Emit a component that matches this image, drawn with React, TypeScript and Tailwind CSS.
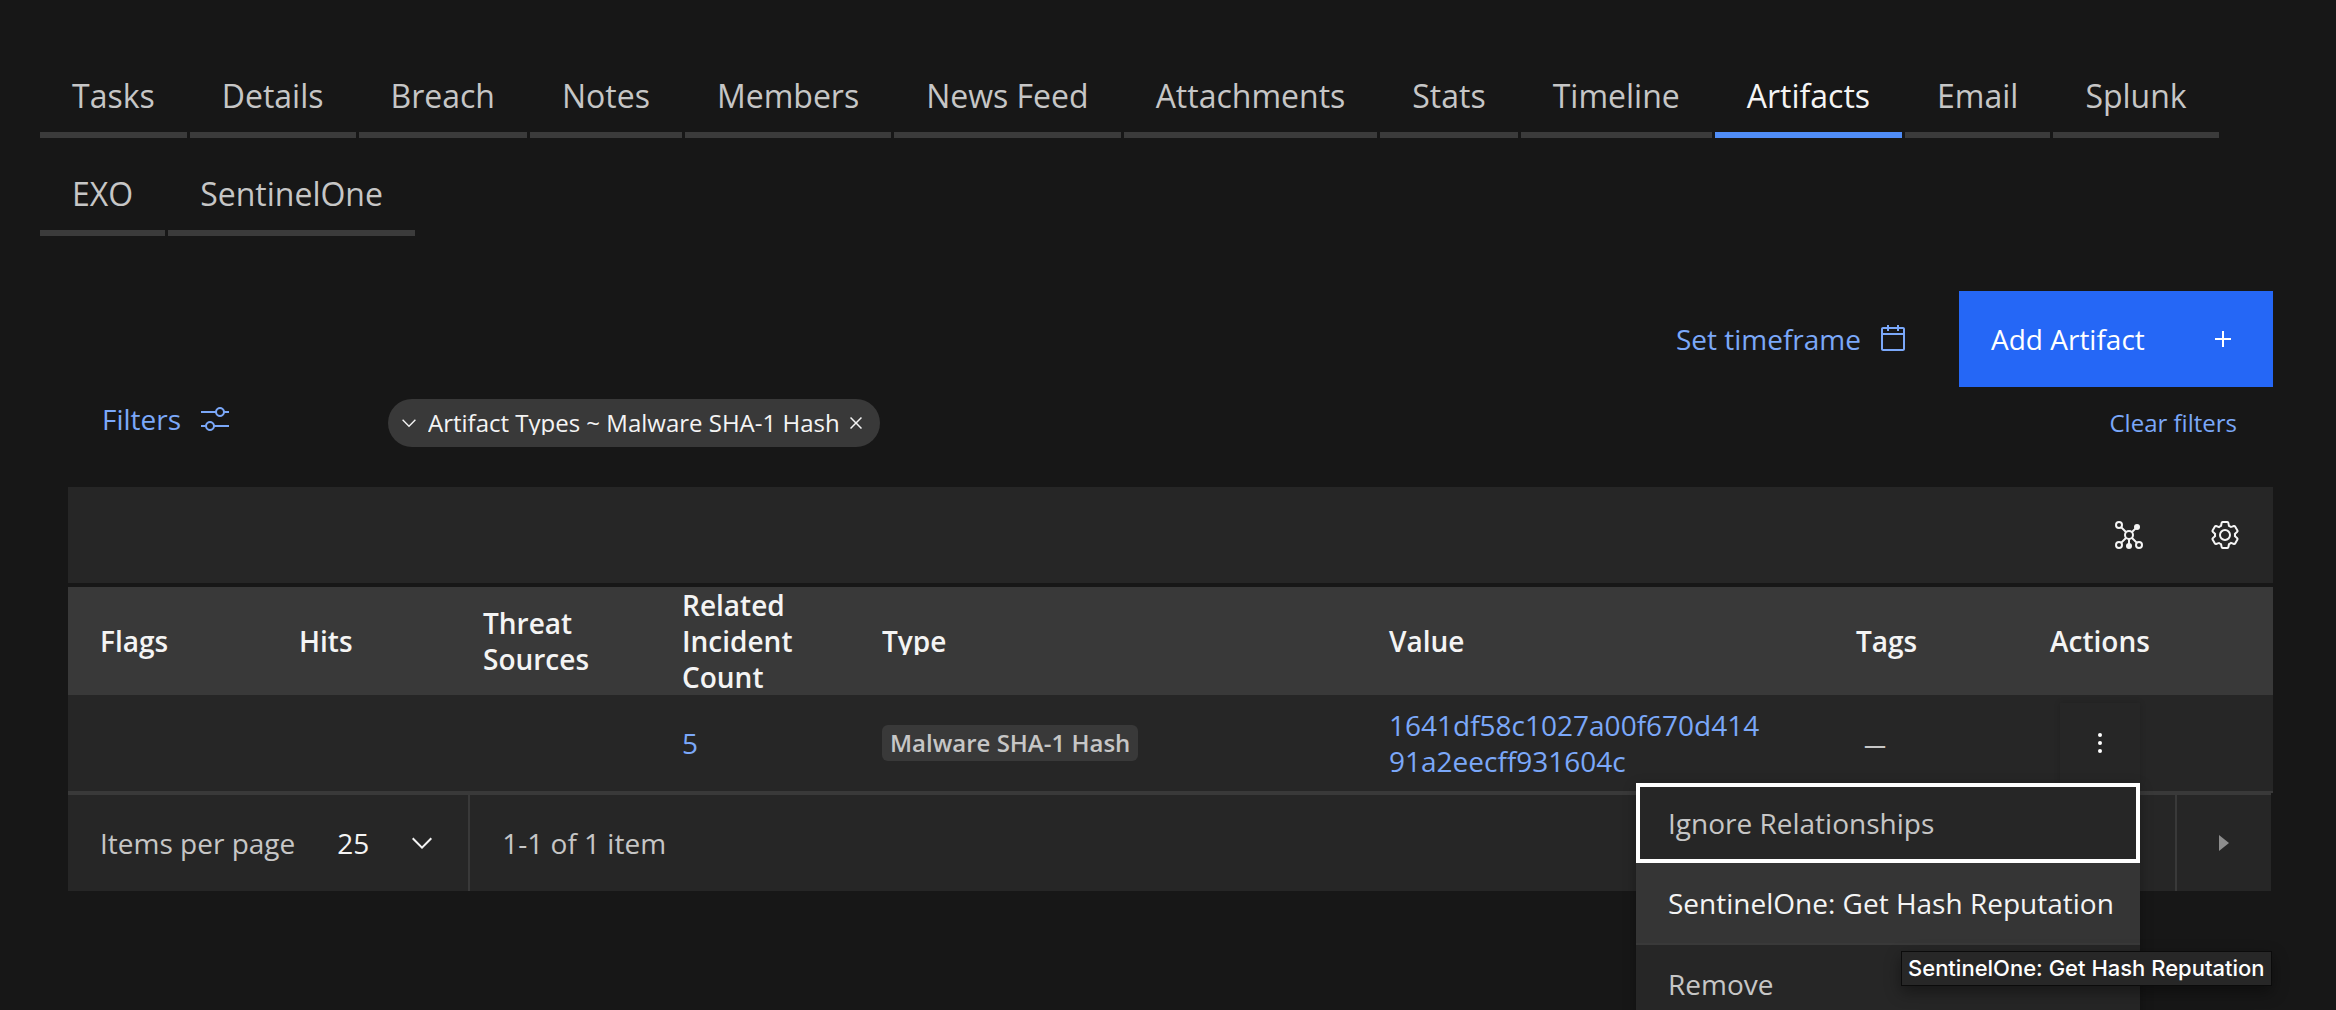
import React from "react";

const TABS = [
  "Tasks",
  "Details",
  "Breach",
  "Notes",
  "Members",
  "News Feed",
  "Attachments",
  "Stats",
  "Timeline",
  "Artifacts",
  "Email",
  "Splunk",
  "EXO",
  "SentinelOne",
];

function Icon({ children, className = "" }: { children: React.ReactNode; className?: string }) {
  return (
    <svg viewBox="0 0 32 32" className={`size-8 shrink-0 fill-current ${className}`} aria-hidden="true">
      {children}
    </svg>
  );
}

function CalendarIcon() {
  return (
    <Icon>
      <path d="M26,4h-4V2h-2v2h-8V2h-2v2H6C4.9,4,4,4.9,4,6v20c0,1.1,0.9,2,2,2h20c1.1,0,2-0.9,2-2V6C28,4.9,27.1,4,26,4z M26,26H6V12h20V26z M26,10H6V6h4v2h2V6h8v2h2V6h4V10z" />
    </Icon>
  );
}

function AdjustIcon() {
  return (
    <Icon>
      <path d="M30,8h-4.1c-0.5-2.3-2.5-4-4.9-4s-4.4,1.7-4.9,4H2v2h14.1c0.5,2.3,2.5,4,4.9,4s4.4-1.7,4.9-4H30V8z M21,12c-1.7,0-3-1.3-3-3s1.3-3,3-3s3,1.3,3,3S22.7,12,21,12z" />
      <path d="M2,24h4.1c0.5,2.3,2.5,4,4.9,4s4.4-1.7,4.9-4H30v-2H15.9c-0.5-2.3-2.5-4-4.9-4s-4.4,1.7-4.9,4H2V24z M11,20c1.7,0,3,1.3,3,3s-1.3,3-3,3s-3-1.3-3-3S9.3,20,11,20z" />
    </Icon>
  );
}

function PlusIcon() {
  return (
    <Icon>
      <path d="M17 15V8h-2v7H8v2h7v7h2v-7h7v-2z" />
    </Icon>
  );
}

function ChevronIcon({ className = "" }: { className?: string }) {
  return (
    <Icon className={className}>
      <path d="M16 22 6 12l1.4-1.4 8.6 8.6 8.6-8.6L26 12z" />
    </Icon>
  );
}

function CloseIcon({ className = "" }: { className?: string }) {
  return (
    <Icon className={className}>
      <path d="M24 9.4 22.6 8 16 14.6 9.4 8 8 9.4l6.6 6.6L8 22.6 9.4 24l6.6-6.6 6.6 6.6 1.4-1.4-6.6-6.6z" />
    </Icon>
  );
}

function NetworkIcon() {
  return (
    <Icon>
      <g fill="none" stroke="currentColor" strokeWidth="2">
        <circle cx="6" cy="6" r="3" />
        <circle cx="16" cy="16" r="4" />
        <circle cx="6" cy="26" r="3" />
        <circle cx="26" cy="26" r="3" />
        <path d="M8.1 8.1l5.1 5.1M22.9 9.1l-4.1 4.1M13.2 18.8l-5.1 5.1M18.8 18.8l5.1 5.1M16 20v5" />
      </g>
      <circle cx="24" cy="8" r="3" />
      <circle cx="16" cy="27" r="3" />
    </Icon>
  );
}

function SettingsIcon() {
  return (
    <Icon>
      <path d="M27,16.76c0-.25,0-.5,0-.76s0-.51,0-.77l1.92-1.68A2,2,0,0,0,29.3,11L26.94,7a2,2,0,0,0-1.73-1,2,2,0,0,0-.64.1l-2.43.82a11.35,11.35,0,0,0-1.31-.75l-.51-2.52a2,2,0,0,0-2-1.61H13.64a2,2,0,0,0-2,1.61l-.51,2.52a11.48,11.48,0,0,0-1.32.75L7.43,6.06A2,2,0,0,0,6.79,6,2,2,0,0,0,5.06,7L2.7,11a2,2,0,0,0,.41,2.51L5,15.24c0,.25,0,.5,0,.76s0,.51,0,.77L3.11,18.45A2,2,0,0,0,2.7,21L5.06,25a2,2,0,0,0,1.73,1,2,2,0,0,0,.64-.1l2.43-.82a11.35,11.35,0,0,0,1.31.75l.51,2.52a2,2,0,0,0,2,1.61h4.72a2,2,0,0,0,2-1.61l.51-2.52a11.48,11.48,0,0,0,1.32-.75l2.42.82a2,2,0,0,0,.64.1,2,2,0,0,0,1.73-1L29.3,21a2,2,0,0,0-.41-2.51ZM25.21,24l-3.43-1.16a8.86,8.86,0,0,1-2.71,1.57L18.36,28H13.64l-.71-3.55a9.36,9.36,0,0,1-2.7-1.57L6.79,24,4.43,20l2.72-2.4a8.9,8.9,0,0,1,0-3.13L4.43,12,6.79,8l3.43,1.16a8.86,8.86,0,0,1,2.71-1.57L13.64,4h4.72l.71,3.55a9.36,9.36,0,0,1,2.7,1.57L25.21,8,27.57,12l-2.72,2.4a8.9,8.9,0,0,1,0,3.13L27.57,20Z" />
      <path d="M16,22a6,6,0,1,1,6-6A5.94,5.94,0,0,1,16,22Zm0-10a3.91,3.91,0,0,0-4,4,3.91,3.91,0,0,0,4,4,3.91,3.91,0,0,0,4-4A3.91,3.91,0,0,0,16,12Z" />
    </Icon>
  );
}

function OverflowIcon() {
  return (
    <Icon>
      <circle cx="16" cy="8" r="2" />
      <circle cx="16" cy="16" r="2" />
      <circle cx="16" cy="24" r="2" />
    </Icon>
  );
}

function CaretRightIcon() {
  return (
    <Icon>
      <path d="M11 8l10 8-10 8z" />
    </Icon>
  );
}

function ActionsMenu() {
  return (
    <div role="menu" className="absolute top-full right-0 z-10 flex w-[504px] flex-col bg-[#262626] text-[#c6c6c6] shadow-[0_4px_12px_rgba(0,0,0,0.3)]">
      <button role="menuitem" className="h-20 border-4 border-white px-7 text-left">
        Ignore Relationships
      </button>
      <div className="relative">
        <button role="menuitem" aria-describedby="reputation-tip" className="h-20 w-full bg-[#353535] px-8 text-left whitespace-nowrap text-[#f4f4f4]">
          SentinelOne: Get Hash Reputation
        </button>
        <span
          id="reputation-tip"
          role="tooltip"
          className="absolute top-[88px] left-[265px] z-20 border border-black/70 bg-[#272727] px-1.5 font-['Inter',sans-serif] text-[22px] leading-[33px] font-medium whitespace-nowrap text-white shadow-[0_6px_16px_rgba(0,0,0,0.4)]"
        >
          SentinelOne: Get Hash Reputation
        </span>
      </div>
      <button role="menuitem" className="h-20 border-t-2 border-[#393939] px-8 text-left">
        Remove
      </button>
    </div>
  );
}

export default function App() {
  return (
    <div className="h-screen overflow-hidden bg-[#171717] font-['Open_Sans','Noto_Sans',sans-serif] text-[28px] leading-9 text-[#c6c6c6]">
      <nav aria-label="Incident sections" className="flex flex-wrap gap-x-[3px] pt-10 pr-[63px] pl-10">
        {TABS.map((tab) => (
          <button
            key={tab}
            aria-current={tab === "Artifacts" ? "page" : undefined}
            className={
              tab === "Artifacts"
                ? "h-[98px] border-b-6 border-[#508df7] px-8 pt-5 text-[32px] text-[#f4f4f4]"
                : "h-[98px] border-b-6 border-[#3b3b3b] px-8 pt-5 text-[32px]"
            }
          >
            {tab}
          </button>
        ))}
      </nav>

      <main className="mt-[55px] pr-[63px] pl-[68px]">
        <div className="flex items-center justify-end gap-[50px]">
          <button className="flex items-center gap-4 text-[#7ba8f9]">
            Set timeframe
            <CalendarIcon />
          </button>
          <button className="flex h-24 w-[314px] items-center justify-between bg-[#2567f6] px-8 pr-[34px] text-white">
            Add Artifact
            <PlusIcon />
          </button>
        </div>

        <div className="mt-3 flex items-start pr-9">
          <button className="flex h-10 w-[320px] items-center gap-[18px] pl-[34px] text-[#7ba8f9]">
            Filters
            <AdjustIcon />
          </button>
          <div className="flex h-12 items-center rounded-full bg-[#393939] text-2xl text-[#f4f4f4]">
            <button aria-label="Expand filter" className="pr-2 pl-2.5">
              <ChevronIcon className="size-[22px]!" />
            </button>
            <span className="overflow-hidden leading-6">Artifact Types ~ Malware SHA-1 Hash</span>
            <button aria-label="Remove filter" className="pr-3 pl-1">
              <CloseIcon className="size-6!" />
            </button>
          </div>
          <button className="ml-auto h-12 text-2xl text-[#7ba8f9]">Clear filters</button>
        </div>

        <section aria-label="Artifacts" className="mt-10">
          <div className="mb-1 flex h-24 justify-end bg-[#262626] text-[#f4f4f4]">
            <button aria-label="Show relationship graph" className="grid w-24 place-items-center">
              <NetworkIcon />
            </button>
            <button aria-label="Table settings" className="grid w-24 place-items-center">
              <SettingsIcon />
            </button>
          </div>

          <table className="w-full table-fixed text-left">
            <thead>
              <tr className="h-[108px] bg-[#393939] text-[#f4f4f4] *:p-0 *:pl-8 *:font-semibold">
                <th className="w-[199px]">Flags</th>
                <th className="w-[184px]">Hits</th>
                <th className="w-[199px]">Threat Sources</th>
                <th className="w-[200px]">
                  Related
                  <br />
                  Incident
                  <br />
                  Count
                </th>
                <th className="w-[507px]">
                  <span className="block overflow-hidden leading-7">Type</span>
                </th>
                <th>Value</th>
                <th className="w-[194px]">Tags</th>
                <th className="w-[255px]">Actions</th>
              </tr>
            </thead>
            <tbody>
              <tr className="h-[97px] border-b-2 border-[#393939] bg-[#262626] *:p-0 *:pl-8">
                <td />
                <td />
                <td />
                <td>
                  <a href="#related" className="text-[#7ba8f9]">
                    5
                  </a>
                </td>
                <td>
                  <span className="block w-fit rounded-md bg-[#393939] px-2 text-2xl leading-9 font-semibold">Malware SHA-1 Hash</span>
                </td>
                <td>
                  <a href="#artifact" className="block max-w-[380px] break-all text-[#7ba8f9]">
                    1641df58c1027a00f670d41491a2eecff931604c
                  </a>
                </td>
                <td>
                  <span className="pl-2 text-[22px] font-semibold">—</span>
                </td>
                <td>
                  <div className="relative ml-2.5 w-20">
                    <button
                      aria-label="Artifact actions"
                      aria-haspopup="menu"
                      aria-expanded="true"
                      className="grid size-20 place-items-center text-white shadow-[0_0_6px_rgba(0,0,0,0.15)]"
                    >
                      <OverflowIcon />
                    </button>
                    <ActionsMenu />
                  </div>
                </td>
              </tr>
            </tbody>
          </table>

          <div className="mr-0.5 flex h-[98px] items-stretch border-t-2 border-[#393939] bg-[#262626]">
            <div className="flex items-center border-r-2 border-[#393939] pl-8">
              <label htmlFor="page-size">Items per page</label>
              <div className="relative flex items-center">
                <select id="page-size" defaultValue="25" className="h-24 w-[173px] appearance-none bg-transparent pl-[42px] text-[#f4f4f4]">
                  <option>25</option>
                  <option>50</option>
                  <option>100</option>
                </select>
                <ChevronIcon className="pointer-events-none absolute right-[30px] text-[#f4f4f4]" />
              </div>
            </div>
            <p className="flex flex-1 items-center pl-8">1-1 of 1 item</p>
            <button aria-label="Next page" className="grid w-24 place-items-center border-l-2 border-[#393939] text-[#8d8d8d]">
              <CaretRightIcon />
            </button>
          </div>
        </section>
      </main>
    </div>
  );
}
